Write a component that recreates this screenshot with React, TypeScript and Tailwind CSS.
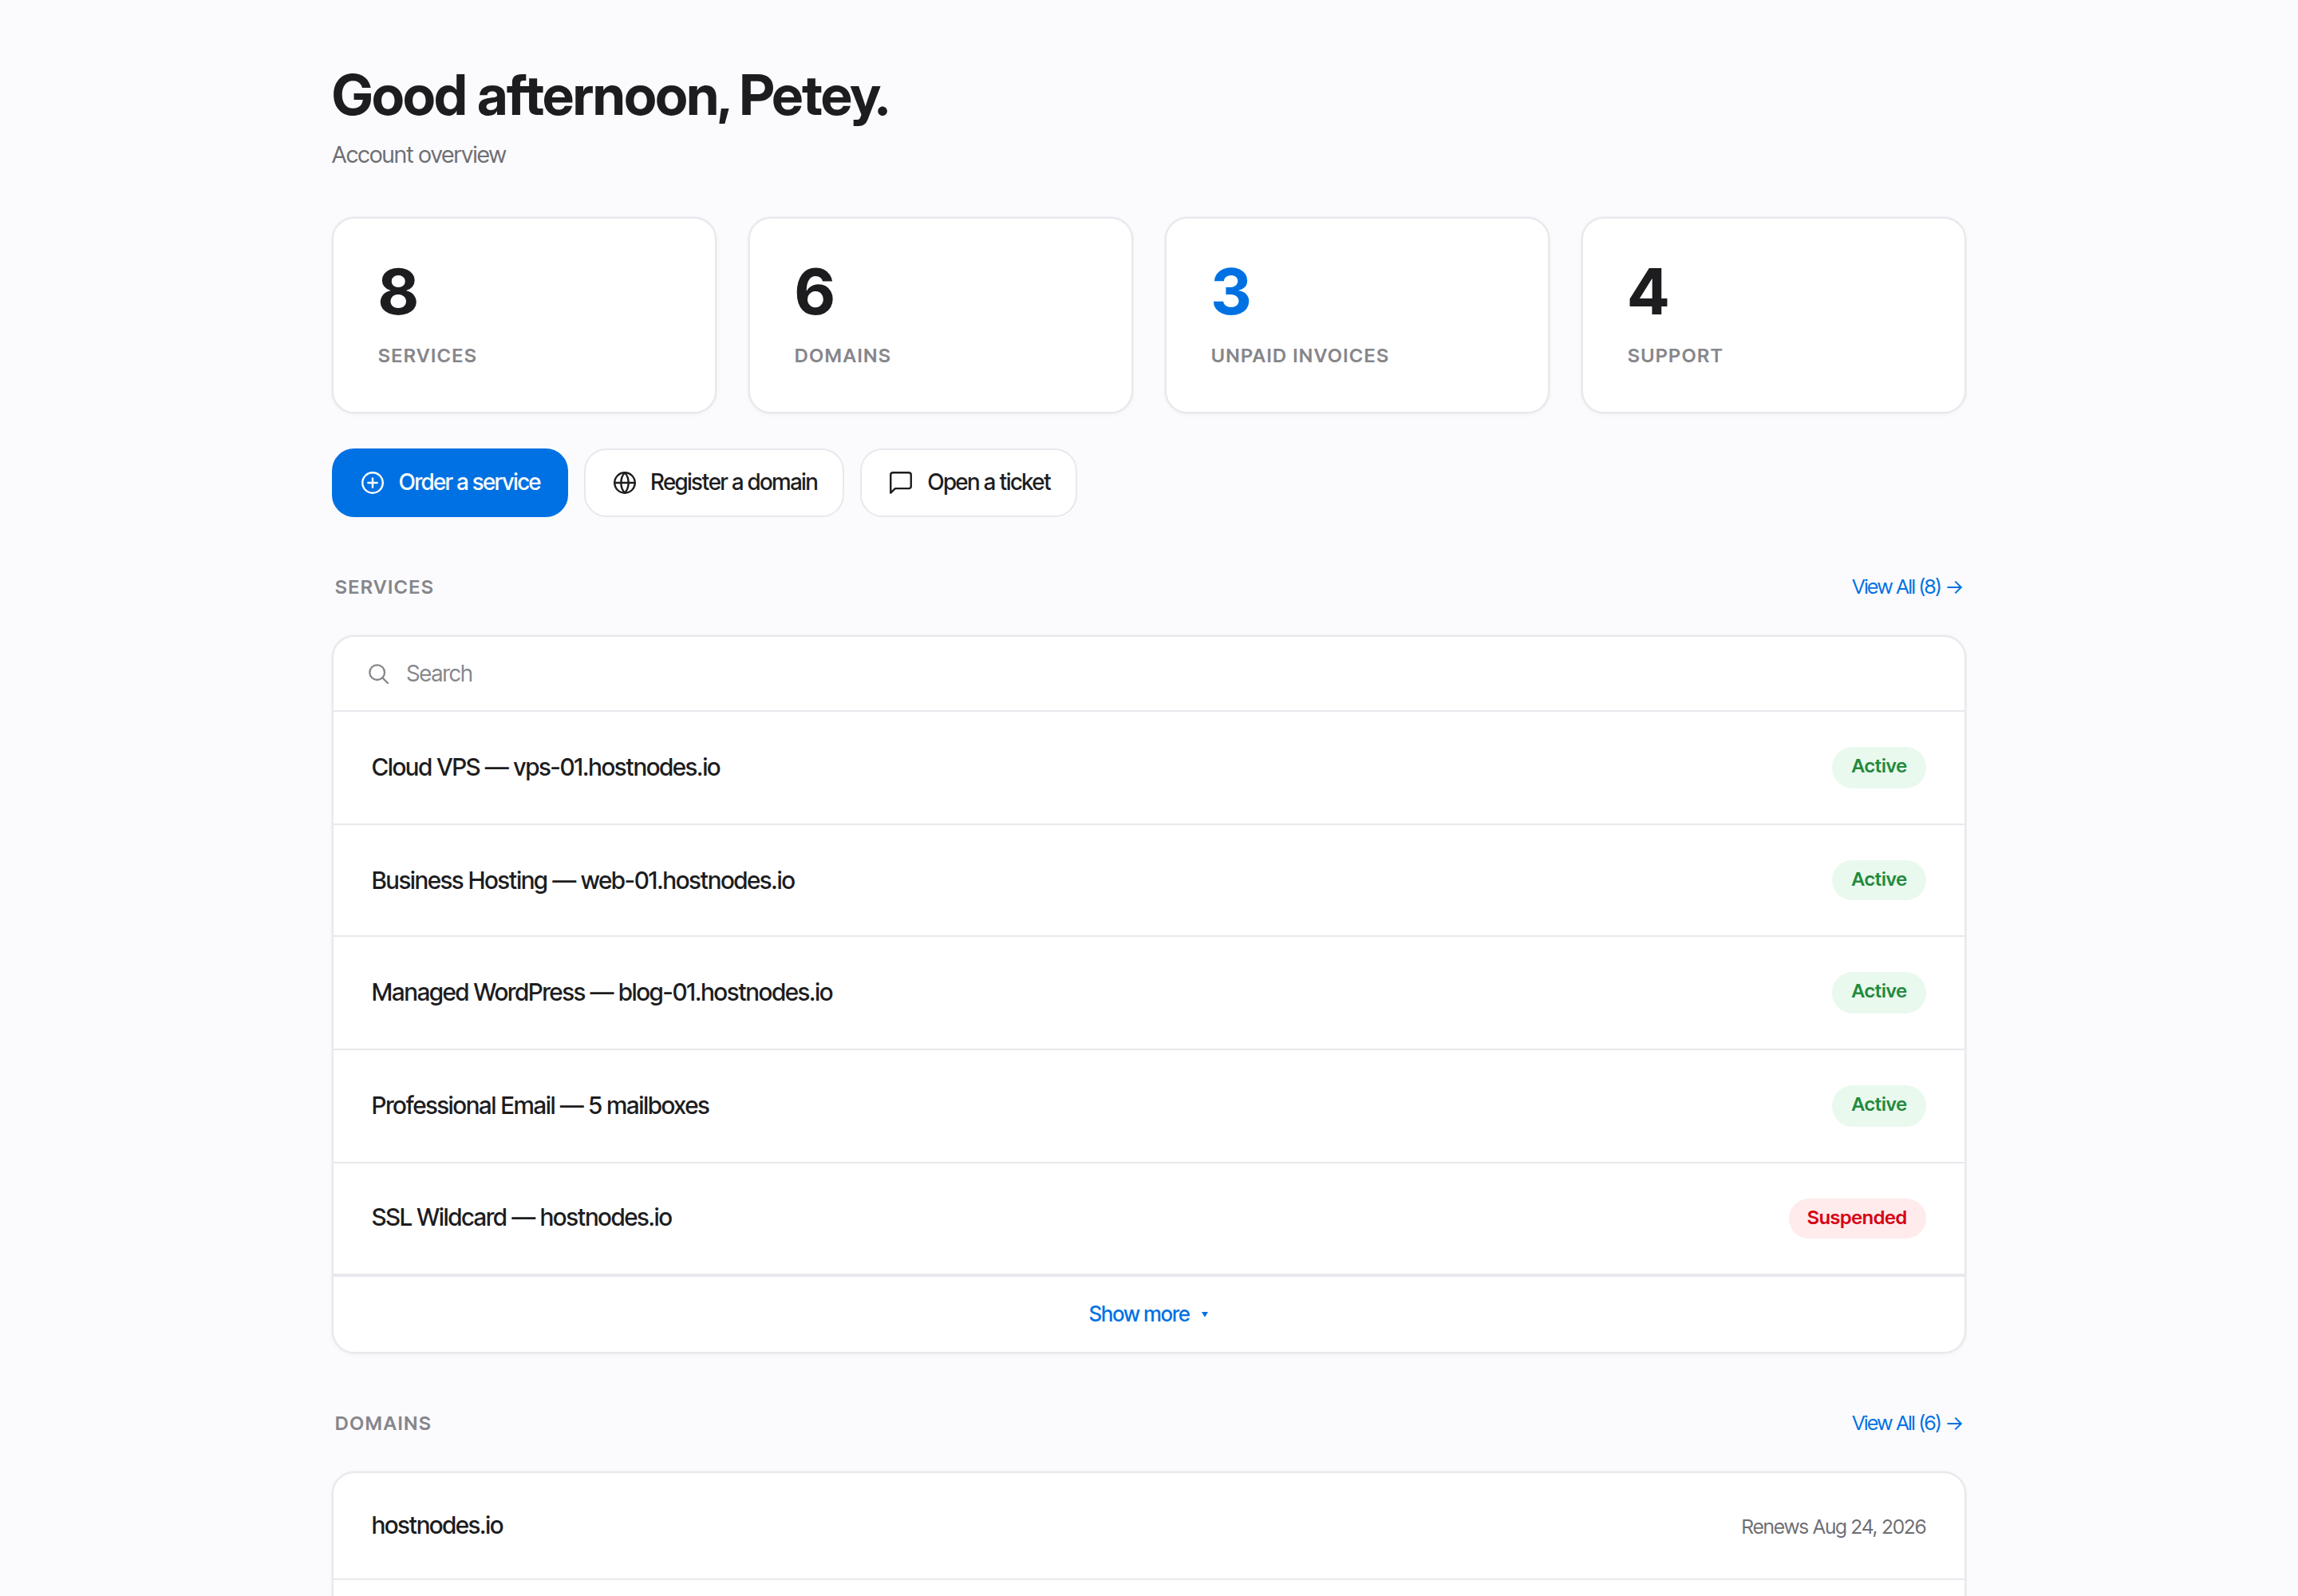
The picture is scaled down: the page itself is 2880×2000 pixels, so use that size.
import React from "react";

const card =
  "border border-[#e8e8ed] rounded-[14px] bg-white shadow-[0_0_0_0.5px_rgba(0,0,0,0.03),0_1px_3px_rgba(0,0,0,0.03)]";

function Stat({ value, label, accent }: { value: string; label: string; accent?: boolean }) {
  return (
    <div className={`${card} h-[123px] flex-1 px-7 pt-[26px]`}>
      <div className={`text-[40px] leading-[40px] font-bold tracking-[-0.02em] ${accent ? "text-[#0071e3]" : "text-[#1d1d1f]"}`}>
        {value}
      </div>
      <div className="mt-2.5 text-[12px] leading-[19px] font-semibold tracking-[0.075em] text-[#86868b]">{label}</div>
    </div>
  );
}

function Icon({ children }: { children: React.ReactNode }) {
  return (
    <svg className="size-[17px]" viewBox="0 0 24 24" fill="none" stroke="currentColor" strokeWidth="1.7" strokeLinecap="round" strokeLinejoin="round">
      {children}
    </svg>
  );
}

function PlusCircle() {
  return (
    <Icon>
      <circle cx="12" cy="12" r="9" />
      <path d="M12 8v8M8 12h8" />
    </Icon>
  );
}

function Globe() {
  return (
    <Icon>
      <circle cx="12" cy="12" r="9" />
      <path d="M3 12h18" />
      <path d="M12 3c2.4 2.6 3.3 5.7 3.3 9s-.9 6.4-3.3 9c-2.4-2.6-3.3-5.7-3.3-9s.9-6.4 3.3-9z" />
    </Icon>
  );
}

function Message() {
  return (
    <Icon>
      <path d="M21 15a2 2 0 0 1-2 2H7l-4 4V5a2 2 0 0 1 2-2h14a2 2 0 0 1 2 2z" />
    </Icon>
  );
}

function SearchIcon() {
  return (
    <svg className="size-4 text-[#86868b]" viewBox="0 0 24 24" fill="none" stroke="currentColor" strokeWidth="1.7" strokeLinecap="round">
      <circle cx="11" cy="11" r="7" />
      <path d="m21 21-5-5" />
    </svg>
  );
}

function Action({ icon, label, primary }: { icon: React.ReactNode; label: string; primary?: boolean }) {
  return (
    <button
      className={`flex h-[43px] items-center gap-2 rounded-[14px] border px-4 text-[14px] font-medium tracking-[-0.023em] ${
        primary ? "border-[#0071e3] bg-[#0071e3] text-white" : "border-[#e8e8ed] bg-white text-[#1d1d1f]"
      }`}
    >
      {icon}
      <span className="-mt-0.5">{label}</span>
    </button>
  );
}

function SectionHead({ title, link }: { title: string; link: string }) {
  return (
    <div className="flex h-[21px] items-center justify-between px-0.5">
      <h2 className="text-[12px] font-semibold tracking-[0.075em] text-[#86868b]">{title}</h2>
      <a className="mt-px text-[12.8px] tracking-[-0.035em] text-[#0071e3]">{link}</a>
    </div>
  );
}

const services = [
  ["Cloud VPS — vps-01.hostnodes.io", "Active"],
  ["Business Hosting — web-01.hostnodes.io", "Active"],
  ["Managed WordPress — blog-01.hostnodes.io", "Active"],
  ["Professional Email — 5 mailboxes", "Active"],
  ["SSL Wildcard — hostnodes.io", "Suspended"],
];

export default function App() {
  return (
    <div className="h-[2000px] w-[2880px] overflow-hidden bg-[#fbfbfd]">
      <div className="h-[1000px] w-[1440px] origin-top-left scale-200 font-['Inter_Tight','Inter',sans-serif]">
        <main className="mx-auto w-[1024px] pt-[39px]">
          <h1 className="font-['Inter_Display','Inter',sans-serif] text-[35px] leading-[40px] font-bold tracking-[-0.0225em] text-[#1d1d1f]">
            Good afternoon, Petey.
          </h1>
          <p className="mt-[5px] text-[14.5px] leading-[25px] tracking-[-0.011em] text-[#6e6e73]">Account overview</p>

          <section className="mt-[27px] flex gap-5">
            <Stat value="8" label="SERVICES" />
            <Stat value="6" label="DOMAINS" />
            <Stat value="3" label="UNPAID INVOICES" accent />
            <Stat value="4" label="SUPPORT" />
          </section>

          <section className="mt-[22px] flex gap-2.5">
            <Action icon={<PlusCircle />} label="Order a service" primary />
            <Action icon={<Globe />} label="Register a domain" />
            <Action icon={<Message />} label="Open a ticket" />
          </section>

          <section className="mt-[33px]">
            <SectionHead title="SERVICES" link="View All (8) →" />
            <div className={`${card} mt-5 h-[450px] overflow-hidden`}>
              <div className="flex h-[47.2px] items-center gap-[9.7px] border-b border-[#e8e8ed] px-5">
                <SearchIcon />
                <span className="-mt-px text-[14px] tracking-[-0.008em] text-[#86868b]">Search</span>
              </div>
              {services.map(([name, status]) => (
                <div key={name} className="flex h-[70.6px] items-center justify-between border-b border-[#e8e8ed] px-6">
                  <span className="-mt-[0.3px] text-[15px] leading-[25.6px] font-medium tracking-[-0.016em] text-[#1d1d1f]">{name}</span>
                  <span
                    className={`h-[25.6px] rounded-full px-3 text-[12px] leading-[24px] font-semibold tracking-[0.008em] ${
                      status === "Active" ? "bg-[#e9f9ee] text-[#248a3d]" : "bg-[#ffebeb] text-[#d70015]"
                    }`}
                  >
                    {status}
                  </span>
                </div>
              ))}
              <div className="flex h-[47.8px] items-center justify-center border-t border-[#e8e8ed] text-[13px] font-medium tracking-[-0.015em] text-[#0071e3]">
                <span>Show more</span>
                <svg className="mr-[0.5px] ml-[7.5px] h-[3.4px] w-[4px]" viewBox="0 0 8 6.8" fill="currentColor">
                  <path d="M0 0h8L4 6.8z" />
                </svg>
              </div>
            </div>
          </section>

          <section className="mt-[33px]">
            <SectionHead title="DOMAINS" link="View All (6) →" />
            <div className={`${card} mt-5 h-[200px] overflow-hidden`}>
              <div className="flex h-[67px] items-center justify-between border-b border-[#e8e8ed] px-6 pt-px">
                <span className="text-[15px] font-medium tracking-[-0.018em] text-[#1d1d1f]">hostnodes.io</span>
                <span className="mt-px text-[12.5px] tracking-[-0.011em] text-[#6e6e73]">Renews Aug 24, 2026</span>
              </div>
            </div>
          </section>
        </main>
      </div>
    </div>
  );
}
